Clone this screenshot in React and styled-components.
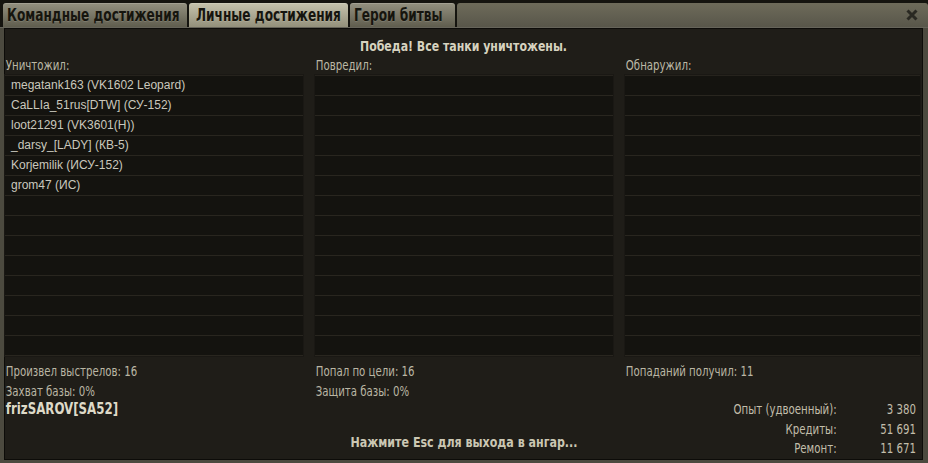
import React from "react";
import styled, { createGlobalStyle, css } from "styled-components";

// no narrow face is installed, so the condensed one is squeezed a little more
const narrow = `"Liberation Sans Narrow", "Arial Narrow", "DejaVu Sans Condensed", "Liberation Sans", sans-serif`;

const squeeze = (s, origin = "left") => css`
  transform: scaleX(${s});
  transform-origin: ${origin} center;
`;

const Global = createGlobalStyle`
  body {
    margin: 0;
    background: #15140f;
  }
`;

const Frame = styled.div`
  width: 928px;
  height: 463px;
  background: #4c4a3f;
  display: flex;
  flex-direction: column;
  box-sizing: border-box;
  overflow: hidden;
`;

const TabBar = styled.div`
  display: flex;
  height: 27px;
  padding: 3px 0 0 3px;
  gap: 2px;
  background: #15140f;
  box-sizing: border-box;
`;

const Tab = styled.div`
  width: ${(p) => p.$w}px;
  height: 24px;
  box-sizing: border-box;
  padding-left: 4px;
  border-radius: 3px 3px 0 0;
  color: #16150e;
  white-space: nowrap;
  background: linear-gradient(#949180, #5f5d4e);
  box-shadow: inset 0 1px 0 rgba(255, 255, 255, 0.15);
  ${(p) =>
    p.$active &&
    css`
      padding-left: 7px;
      background: linear-gradient(#c6c3ad, #8f8c77);
      height: 26px;
      margin-bottom: -2px;
    `}
`;

const TabLabel = styled.span`
  display: inline-block;
  font: bold 17px ${narrow};
  line-height: 25px;
  text-shadow: 0 1px 0 rgba(255, 255, 255, 0.12);
  ${squeeze(0.795)}
`;

const TabFill = styled.div`
  flex: 1;
  display: flex;
  justify-content: flex-end;
  align-items: center;
  padding-right: 10px;
  border-radius: 3px 3px 0 0;
  background: linear-gradient(#6e6b5a, #58564a);
`;

const Close = styled.svg`
  width: 12px;
  height: 12px;
`;

const Band = styled.div`
  height: 6px;
  background: #5a584b;
  border-top: 1px solid #66645a;
  box-sizing: border-box;
`;

const Panel = styled.div`
  flex: 1;
  margin: 0 5px 5px 4px;
  background: #1f1d18;
  border: 1px solid #0d0c09;
  display: flex;
  flex-direction: column;
  padding-top: 8px;
`;

const Title = styled.div`
  text-align: center;
  font: bold 14px ${narrow};
  line-height: 18px;
  color: #d6d2bf;
  ${squeeze(0.87, "center")}
`;

const Columns = styled.div`
  display: grid;
  grid-template-columns: 298px 298px 295px;
  column-gap: 12px;
`;

const Column = styled.div`
  display: flex;
  flex-direction: column;
`;

const Label = styled.div`
  padding-left: 1px;
  font: 14px ${narrow};
  line-height: 16px;
  margin-top: 2px;
  color: #bcb8a6;
  ${squeeze(0.81)}
`;

const RowList = styled.div`
  margin-top: 2px;
  border-top: 1px solid #26231d;
  box-shadow: 0 0 0 1px #1a1814;
`;

const Row = styled.div`
  height: 19px;
  border-bottom: 1px solid #29261f;
  background: #14130f;
  padding-left: 6px;
  font: 12px "Liberation Sans", Arial, sans-serif;
  line-height: 19px;
  color: #cac8bd;
  white-space: nowrap;
`;

const Stats = styled.div`
  display: flex;
  flex-direction: column;
  margin-top: 5px;
`;

const Stat = styled.div`
  padding-left: 1px;
  font: 14px ${narrow};
  line-height: 20px;
  color: #bab6a4;
  white-space: nowrap;
  ${squeeze(0.81)}
`;

const Name = styled.div`
  padding-left: 1px;
  font: bold 16px ${narrow};
  line-height: 18px;
  margin-top: -1px;
  color: #dedac8;
  ${squeeze(0.82)}
`;

const Exit = styled.div`
  margin-top: 32px;
  text-align: center;
  font: bold 14px ${narrow};
  line-height: 18px;
  color: #cbc7b3;
  white-space: nowrap;
  ${squeeze(0.88, "center")}
`;

const Rewards = styled.div`
  display: grid;
  grid-template-columns: auto 98px;
  justify-content: end;
  padding-right: 5px;
  margin-top: 19px;
  font: 14px ${narrow};
  line-height: 19.5px;
  color: #c2beab;
  text-align: right;
  white-space: nowrap;
  ${squeeze(0.81, "right")}
`;

const killed = [
  "megatank163 (VK1602 Leopard)",
  "CaLLIa_51rus[DTW] (СУ-152)",
  "loot21291 (VK3601(H))",
  "_darsy_[LADY] (КВ-5)",
  "Korjemilik (ИСУ-152)",
  "grom47 (ИС)",
];

const ROWS = 14;

function List({ items = [] }) {
  return (
    <RowList>
      {Array.from({ length: ROWS }, (_, i) => (
        <Row key={i}>{items[i] || ""}</Row>
      ))}
    </RowList>
  );
}

export default function App() {
  return (
    <Frame>
      <Global />
      <TabBar>
        <Tab $w={184}>
          <TabLabel>Командные достижения</TabLabel>
        </Tab>
        <Tab $w={159} $active>
          <TabLabel>Личные достижения</TabLabel>
        </Tab>
        <Tab $w={105}>
          <TabLabel>Герои битвы</TabLabel>
        </Tab>
        <TabFill>
          <Close viewBox="0 0 12 12">
            <path d="M1.5 1.5 L10.5 10.5 M10.5 1.5 L1.5 10.5" stroke="#2a2922" strokeWidth="3" />
          </Close>
        </TabFill>
      </TabBar>
      <Band />
      <Panel>
        <Title>Победа! Все танки уничтожены.</Title>
        <Columns>
          <Column>
            <Label>Уничтожил:</Label>
            <List items={killed} />
            <Stats>
              <Stat>Произвел выстрелов: 16</Stat>
              <Stat>Захват базы: 0%</Stat>
              <Name>frizSAROV[SA52]</Name>
            </Stats>
          </Column>
          <Column>
            <Label>Повредил:</Label>
            <List />
            <Stats>
              <Stat>Попал по цели: 16</Stat>
              <Stat>Защита базы: 0%</Stat>
              <Exit>Нажмите Esc для выхода в ангар...</Exit>
            </Stats>
          </Column>
          <Column>
            <Label>Обнаружил:</Label>
            <List />
            <Stats>
              <Stat>Попаданий получил: 11</Stat>
              <Rewards>
                <span>Опыт (удвоенный):</span>
                <span>3 380</span>
                <span>Кредиты:</span>
                <span>51 691</span>
                <span>Ремонт:</span>
                <span>11 671</span>
              </Rewards>
            </Stats>
          </Column>
        </Columns>
      </Panel>
    </Frame>
  );
}
